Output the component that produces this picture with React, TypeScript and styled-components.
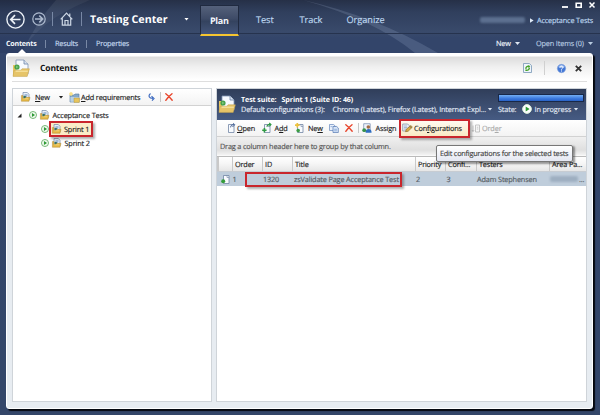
import React from "react";
import styled, { createGlobalStyle, css } from "styled-components";

const GlobalStyle = createGlobalStyle`
  *, *::before, *::after { box-sizing: border-box; }
  body { margin: 0; overflow: hidden; }
  svg { display: block; flex: none; overflow: visible; }
`;

const Window = styled.div`
  position: relative;
  width: 600px;
  height: 415px;
  display: flex;
  flex-direction: column;
  overflow: hidden;
  font: 7px/10px "Open Sans", "Noto Sans", sans-serif;
  text-rendering: geometricPrecision;
  white-space: nowrap;
  color: #1c1c1c;
  background: linear-gradient(180deg, #263047 0, #303f5d 12px, #394a6b 32px, #33456a 38px, #334669 100%);
`;

const Backdrop = styled.svg`
  position: absolute;
  inset: 0;
`;

const Header = styled.header`
  position: relative;
  display: flex;
  height: 34px;
  padding-left: 6px;
  border-bottom: 1px solid #26334e;
`;

const Brand = styled.div`
  display: flex;
  align-items: center;
  width: 194px;
  padding-top: 5px;
`;

const Bar = styled.span<{ $h?: number; $left?: number; $right?: number; $color?: string }>`
  flex: none;
  width: 1px;
  height: ${(p) => p.$h ?? 10}px;
  margin-left: ${(p) => p.$left ?? 0}px;
  margin-right: ${(p) => p.$right ?? 0}px;
  background: ${(p) => p.$color ?? "#7888a5"};
`;

const Gap = styled.span<{ $w: number }>`
  flex: none;
  width: ${(p) => p.$w}px;
`;

const Label = styled.span<{ $w?: number; $size?: number; $bold?: boolean; $color?: string; $track?: number }>`
  display: block;
  flex: none;
  padding-top: 1px;
  ${(p) => p.$w !== undefined && css`width: ${p.$w}px;`}
  font-size: ${(p) => p.$size ?? 7.3}px;
  font-weight: ${(p) => (p.$bold ? 700 : 400)};
  color: ${(p) => p.$color ?? "inherit"};
  letter-spacing: ${(p) => p.$track ?? -0.15}px;
  ${(p) => !p.$bold && css`-webkit-text-stroke: 0.15px currentColor;`}
`;

const Under = styled.span`
  text-decoration: underline;
  text-decoration-thickness: 0.7px;
  text-underline-offset: 1px;
`;

const Caret = styled.span<{ $color?: string }>`
  flex: none;
  width: 5px;
  height: 3px;
  clip-path: polygon(0 0, 100% 0, 50% 100%);
  background: ${(p) => p.$color ?? "#dfe7f3"};
`;

const ActiveTab = styled.div`
  width: 39px;
  height: 31px;
  margin-top: 5px;
  padding: 0 0 0 9px;
  display: flex;
  align-items: center;
  border: 1px solid #202a40;
  border-bottom: 2px solid #f5c530;
  border-radius: 1px 1px 0 0;
  background: linear-gradient(180deg, #55617b 0, #3e4b67 45%, #34435f 55%, #44557a 100%);
`;

const Tabs = styled.div`
  display: flex;
  align-items: center;
  padding: 6px 0 0 17px;
`;

const TopRight = styled.div`
  margin-left: auto;
  display: flex;
  flex-direction: column;
  align-items: flex-end;
`;

const WindowButtons = styled.div`
  display: flex;
  height: 9px;
  align-items: center;
  padding-right: 5px;
`;

const Crumbs = styled.div`
  display: flex;
  align-items: center;
  height: 21px;
  padding: 1px 7px 0 0;
`;

const Smudge = styled.span<{ $w: number; $color: string }>`
  flex: none;
  width: ${(p) => p.$w}px;
  height: 6px;
  border-radius: 2px;
  background: ${(p) => p.$color};
  filter: blur(1.3px);
`;

const SubNav = styled.nav`
  position: relative;
  display: flex;
  align-items: center;
  height: 19px;
  padding: 0 7px 0 6px;
`;

const Notch = styled.span`
  position: absolute;
  left: 18px;
  bottom: 0;
  width: 8px;
  height: 4px;
  clip-path: polygon(50% 0, 100% 100%, 0 100%);
  background: #fff;
`;

const Push = styled.span`
  margin-left: auto;
`;

const Sheet = styled.main`
  position: relative;
  display: flex;
  flex-direction: column;
  width: 587px;
  height: 356px;
  margin-left: 6px;
  padding: 0 5px 6px;
  border: 1px solid #fff;
  border-radius: 3px;
  background: linear-gradient(180deg, #fff 0, #fff 2px, #dcdcdc 3px, #f0f0f0 13px, #fff 26px, #fff 33px, #e7ecf1 60px);
  box-shadow: 2px 2px 1px #05080f;
`;

const SheetHeader = styled.div`
  display: flex;
  align-items: center;
  height: 28px;
  padding: 1px 5px 0 0;
  border-bottom: 1px solid #dedede;
  flex: none;
`;

const Columns = styled.div`
  display: flex;
  flex: 1;
  min-height: 0;
  gap: 4px;
  margin-top: 6px;
`;

const Pane = styled.section<{ $w: number }>`
  display: flex;
  flex: none;
  flex-direction: column;
  width: ${(p) => p.$w}px;
  border: 1px solid #cfd4d9;
  background: #fff;
`;

const Toolbar = styled.div<{ $pad: number }>`
  display: flex;
  align-items: center;
  flex: none;
  height: 17px;
  padding-left: ${(p) => p.$pad}px;
  border-bottom: 1px solid #d2d2d2;
  background: linear-gradient(180deg, #fff, #f3f3f3);
`;

const Tree = styled.div`
  padding-top: 2px;
`;

const TreeRow = styled.div<{ $indent: number }>`
  display: flex;
  align-items: center;
  height: 14px;
  padding-left: ${(p) => p.$indent}px;
`;

const marked = css`
  border: 2px solid #c9262d;
  box-shadow: 2px 2px 2px rgba(60, 60, 60, 0.4);
`;

const SelectedNode = styled.div`
  position: relative;
  display: flex;
  flex: none;
  align-items: center;
  width: 44px;
  height: 16px;
  margin-left: -1px;
  padding-left: 0.5px;
  background: #faedc8;
  ${marked}
`;

const SuiteHeader = styled.div`
  display: flex;
  flex: none;
  height: 31px;
  padding-left: 1px;
  background: linear-gradient(180deg, #303e5a, #465b83);
  color: #e2e9f4;
`;

const SuiteIconHolder = styled.div`
  width: 18px;
  margin-right: 3px;
  padding-top: 6px;
`;

const SuiteInfo = styled.div`
  display: flex;
  flex-direction: column;
  width: 259px;
  padding: 5px 0 0 2px;
`;

const Line = styled.div`
  display: flex;
  align-items: center;
  height: 10px;
`;

const SuiteState = styled.div`
  display: flex;
  flex-direction: column;
  gap: 2px;
  padding-top: 5px;
`;

const Progress = styled.div`
  width: 86px;
  height: 8px;
  border: 1px solid #182848;
  background: linear-gradient(180deg, #73aef2, #3a78dd 60%, #2962c4);
`;

const MarkedButton = styled.div`
  position: relative;
  z-index: 1;
  display: flex;
  flex: none;
  align-items: center;
  width: 71px;
  height: 19px;
  padding-left: 1px;
  background: linear-gradient(180deg, #fffaf0, #f9eac4);
  ${marked}
`;

const GroupBar = styled.div`
  position: relative;
  flex: none;
  height: 20px;
  padding: 4px 0 0 3px;
  background: linear-gradient(180deg, #f0f0f0, #dfdfdf 13px, #f3f3f3 18px, #fff);
  border-bottom: 1px solid #bbb;
  color: #555;
`;

const Tooltip = styled.div`
  position: absolute;
  z-index: 2;
  left: 219px;
  top: 8px;
  width: 137px;
  height: 17px;
  padding: 2px 0 0 3px;
  border: 1px solid #777;
  border-radius: 2px;
  background: linear-gradient(180deg, #fff, #e5e8f2);
  box-shadow: 1.5px 1.5px 2px rgba(0, 0, 0, 0.4);
  color: #444;
`;

const GridHeader = styled.div`
  display: flex;
  flex: none;
  height: 15px;
  background: linear-gradient(180deg, #fff, #f5f5f5 50%, #e6e6e6);
  border-bottom: 1px solid #c7ccd2;
`;

const HeadCell = styled.div<{ $w: number }>`
  width: ${(p) => p.$w}px;
  flex: none;
  padding: 2px 0 0 ${(p) => (p.$w > 2 ? 2 : 0)}px;
  border-left: 1px solid #c9c9c9;
`;

const GridRow = styled.div`
  position: relative;
  display: flex;
  align-items: center;
  flex: none;
  height: 14px;
  background: #bfcddb;
  color: #555b62;
`;

const RowMark = styled.span`
  position: absolute;
  left: 28px;
  top: 0;
  width: 157px;
  height: 15px;
  ${marked}
`;

const Play = ({ s = 8, solid = false }: { s?: number; solid?: boolean }) => (
  <svg width={s} height={s} viewBox="0 0 10 10">
    <circle cx="5" cy="5" r="4.4" fill={solid ? "#fff" : "#f2faf0"} stroke={solid ? "#d8ecd8" : "#58a858"} strokeWidth="1" />
    <path d="M3.7 2.5 7.6 5 3.7 7.5Z" fill="#2d9a35" />
  </svg>
);

const SuiteIcon = ({ s }: { s: number }) => (
  <svg width={s} height={s} viewBox="0 0 18 18">
    <path d="M4 1h8l4 4v10H4Z" fill="#f7faff" stroke="#8296b4" strokeWidth=".8" />
    <path d="M12 1v4h4" fill="#d7e2f1" stroke="#6f86a8" strokeWidth=".8" />
    <path d="M1 6v11h3V6Z" fill="#e7c560" />
    <path d="M2 11.2h7l1-1.4h7.4L15.2 17.4H1Z" fill="#e6c468" stroke="#c2a04c" strokeWidth=".5" />
    <path d="M3.6 12.2h12.2" stroke="#fbe9ac" strokeWidth="1" />
    <circle cx="5" cy="8" r="2.6" fill="#47a14b" />
    <path d="M4 6.5 6.6 8 4 9.5Z" fill="#7cc47c" />
  </svg>
);

const SmallSuite = () => (
  <svg width="9" height="10" viewBox="0 0 9 10">
    <path d="M2 .5h4.3L8 2.3V8H2Z" fill="#e9f0f8" stroke="#7288a8" strokeWidth=".7" />
    <path d="M3.5 3h3M3.5 4.5h2" stroke="#4d7bb8" strokeWidth=".9" />
    <path d="M.4 3.5v5.8h7.6l1-4H4.4l-.8.9H1.9V3.5Z" fill="#e3b743" stroke="#a67c26" strokeWidth=".4" />
    <path d="M2.3 6.8h5" stroke="#f9e18f" strokeWidth=".7" />
    <circle cx="3.6" cy="5" r="1.2" fill="#39745f" />
  </svg>
);

const AddRequirements = () => (
  <svg width="11" height="11" viewBox="0 0 11 11">
    <path d="M1 3h4l1-1h4v8H1Z" fill="#86a9c9" stroke="#557b9d" strokeWidth=".6" />
    <path d="M1.4 5h8.4v4.8H1.4Z" fill="#b9d1e4" />
    <path d="M5 6h5.4v4.4H5Z" fill="#e8c55c" stroke="#a98a2f" strokeWidth=".4" />
    <circle cx="2" cy="2" r="1.7" fill="#f2cf58" />
    <path d="M2 0v4M0 2h4" stroke="#fff3ba" strokeWidth=".6" />
  </svg>
);

const RedX = () => (
  <svg width="8" height="8" viewBox="0 0 8 8">
    <path d="M.8.8C3 2.5 5.4 5 7.2 7.3M7 .7C5 2.3 2.4 4.8.8 7.3" fill="none" stroke="#e8452c" strokeWidth="1.4" strokeLinecap="round" />
  </svg>
);

const Page = ({ kind }: { kind: "open" | "add" | "new" | "child" }) => (
  <svg width="10" height="10" viewBox="0 0 10 10">
    <path d="M2.5 1.5H8v8H2.5Z" fill="#f9fbfe" stroke="#7185a4" strokeWidth=".8" />
    <path d="M6 1.5v2h2" fill="none" stroke="#7185a4" strokeWidth=".6" />
    {kind === "open" && <path d="M4.6 4.4C4.6 2.4 6 1.4 8 1.7M7.2.2 8.8 1.7 7.4 3.2" fill="none" stroke="#3f5f94" strokeWidth=".9" />}
    {kind === "add" && (
      <>
        <path d="M5 3.8C5 2 6.4 1.3 8 1.5M7.2 0l1.7 1.5-1.4 1.6" fill="none" stroke="#2f9a43" strokeWidth="1.2" />
        <path d="M.2 7.2h4.4M2.4 5v4.4" stroke="#2f9a43" strokeWidth="1.6" />
      </>
    )}
    {kind === "new" && (
      <>
        <path d="M0 2.2h4.6M2.3 0v4.6" stroke="#edc23c" strokeWidth="1.7" />
        <circle cx="3.2" cy="7.6" r="1.8" fill="#3b9c43" />
      </>
    )}
    {kind === "child" && <circle cx="2.2" cy="7.3" r="2" fill="#359c3b" />}
  </svg>
);

const CopyIcon = () => (
  <svg width="10" height="9" viewBox="0 0 10 9">
    <path d="M.5.5h4l1.5 1.3V6.5H.5Z" fill="#e9f0fb" stroke="#6487bd" strokeWidth=".7" />
    <path d="M4 2.5h3.7L9.3 4v4.5H4Z" fill="#d9e6f8" stroke="#5377b1" strokeWidth=".7" />
    <path d="M5.2 5.3h2.7M5.2 6.8h2.7M1.5 2.6h2" stroke="#6790ca" strokeWidth=".6" />
  </svg>
);

const AssignIcon = () => (
  <svg width="10" height="10" viewBox="0 0 10 10">
    <path d="M1.7.7h6.5v7.5H1.7Z" fill="#edf3fb" stroke="#7188ad" strokeWidth=".7" />
    <circle cx="6.3" cy="4" r="1.8" fill="#a26c44" />
    <path d="M3.6 9.7c0-3 1.4-3.7 3-3.7s3 .7 3 3.7Z" fill="#2f6dc0" />
    <circle cx="2.2" cy="7.2" r="1.9" fill="#36924b" />
  </svg>
);

const ConfigIcon = () => (
  <svg width="11" height="10" viewBox="0 0 11 10">
    <path d="M.7 1h5l2 2-2.4 5H.7Z" fill="#e8edf3" stroke="#7f8da0" strokeWidth=".7" />
    <path d="M2 3h3M2 4.5h3M2 6h2" stroke="#7897bf" strokeWidth=".6" />
    <path d="m3.5 8.7.8-2.6L9 2.5l1.3 1.7-4.2 4.1Z" fill="#d7ad45" stroke="#85662a" strokeWidth=".6" />
    <path d="m8 3.3 1.5 1.8" stroke="#555" strokeWidth=".7" />
  </svg>
);

export default function App() {
  return (
    <>
      <GlobalStyle />
      <Window>
        <Backdrop width="600" height="415" viewBox="0 0 600 415">
          <path d="M0 0H56Q36 22 22 53H0Z" fill="#0b1530" opacity=".1" />
          <path d="M56 0H90Q36 22 22 53Q36 22 56 0Z" fill="#fff" opacity=".05" />
          <path d="M303 0Q375 16 438 53H415Q375 20 303 0Z" fill="#b9cbe6" opacity=".17" />
        </Backdrop>
        <Header>
          <Brand>
            <svg width="19" height="19" viewBox="0 0 19 19" fill="none" stroke="#edf2f8">
              <circle cx="9.5" cy="9.5" r="8.6" strokeWidth="1.4" />
              <path d="M14.5 9.5h-9M9 5.2 4.8 9.5 9 13.8" strokeWidth="1.7" />
            </svg>
            <Gap $w={7} />
            <svg width="14" height="14" viewBox="0 0 14 14" fill="none" stroke="#aebbcf">
              <circle cx="7" cy="7" r="6.2" strokeWidth="1.2" />
              <path d="M3 7h7M7.3 3.6 10.7 7l-3.4 3.4" strokeWidth="1.5" />
            </svg>
            <Bar $h={14} $left={6} $right={7} />
            <svg width="13" height="14" viewBox="0 0 13 14" fill="none" stroke="#cdd7e5" strokeWidth="1.2">
              <path d="M.7 7.4 6.5 1.2l5.8 6.2M2.3 6.2v7h8.4v-7M5 13V8.5h3V13M9.8 4V1.5" />
            </svg>
            <Bar $h={14} $left={8} $right={8} />
            <Label $w={94} $size={10.7} $bold $color="#fff" $track={0}>Testing Center</Label>
            <Caret $color="#fff" />
          </Brand>
          <ActiveTab><Label $size={9} $bold $color="#f3f6fb" $track={-0.3}>Plan</Label></ActiveTab>
          <Tabs>
            <Label $w={43.5} $size={9.2} $color="#bed7ef" $track={-0.05}>Test</Label>
            <Label $w={47} $size={9.2} $color="#bed7ef" $track={-0.05}>Track</Label>
            <Label $size={9.2} $color="#bed7ef" $track={-0.05}>Organize</Label>
          </Tabs>
          <TopRight>
            <WindowButtons>
              <svg width="34" height="8" viewBox="0 0 34 8" fill="none" stroke="#fff">
                <path d="M1 6h6" strokeWidth="1.8" />
                <path d="M15.2 2.2h5v4h-5Z" strokeWidth="1.6" />
                <path d="m28.5 1.5 5 5m0-5-5 5" strokeWidth="1.5" />
              </svg>
            </WindowButtons>
            <Crumbs>
              <Smudge $w={45} $color="#5c6f8f" />
              <Gap $w={5} />
              <svg width="4" height="5" viewBox="0 0 4 5"><path d="M0 .2 3.6 2.5 0 4.8Z" fill="#e1ebf7" /></svg>
              <Gap $w={3} />
              <Label $color="#bed7ef">Acceptance Tests</Label>
            </Crumbs>
          </TopRight>
        </Header>
        <SubNav>
          <Label $w={39} $size={7.1} $bold $color="#f4f7fb" $track={-0.2}>Contents</Label>
          <Bar $h={8} $right={9} />
          <Label $w={31} $color="#c4d9ee" $track={-0.22}>Results</Label>
          <Bar $h={8} $right={9} />
          <Label $color="#c4d9ee" $track={-0.22}>Properties</Label>
          <Push />
          <Label $w={19} $color="#eef3fa">New</Label>
          <Caret />
          <Gap $w={16} />
          <Label $w={52} $color="#b8cbe0">Open Items (0)</Label>
          <Caret $color="#b8cbe0" />
          <Notch />
        </SubNav>
        <Sheet>
          <SheetHeader>
            <SuiteIcon s={18} />
            <Gap $w={10} />
            <Label $size={8.5} $bold $color="#151515" $track={-0.15}>Contents</Label>
            <Push />
            <svg width="9" height="10" viewBox="0 0 9 10">
              <path d="M.5.5h5.8l2.2 2V9.5h-8Z" fill="#eff5fc" stroke="#7797b5" strokeWidth=".8" />
              <path d="M6.5 3.4C3.8 2.9 3 4 2.8 5.8M2.4 7c2.3.8 3.8-.1 4-2.2" fill="none" stroke="#47a328" strokeWidth="1.4" />
              <path d="m5.5 2 1.8 1.7-2 1.3Z" fill="#47a328" />
            </svg>
            <Bar $h={14} $left={12} $right={12} $color="#d0d0d0" />
            <svg width="9" height="9" viewBox="0 0 9 9">
              <circle cx="4.5" cy="4.5" r="4.2" fill="#4579d6" stroke="#8caadd" strokeWidth=".6" />
              <path d="M1.2 3A3.7 3.7 0 0 1 7.8 3Q4.5 4.7 1.2 3Z" fill="#a9c5f3" />
              <path d="M3 3.5C3.2 1.8 6 2 5.9 3.5 5.8 4.6 4.5 4.4 4.5 5.6M4.5 6.5v1" fill="none" stroke="#fff" strokeWidth="1" />
            </svg>
            <Gap $w={9} />
            <svg width="7" height="7" viewBox="0 0 7 7"><path d="m.8.8 5.4 5.4m0-5.4L.8 6.2" stroke="#333" strokeWidth="1.8" /></svg>
          </SheetHeader>
          <Columns>
            <Pane $w={200}>
              <Toolbar $pad={8}>
                <SmallSuite />
                <Gap $w={5} />
                <Label $w={23.5}><Under>N</Under>ew</Label>
                <Caret $color="#222" />
                <Gap $w={5} />
                <AddRequirements />
                <Gap $w={1.5} />
                <Label $w={67}><Under>A</Under>dd requirements</Label>
                <svg width="7" height="8" viewBox="0 0 7 8">
                  <path d="M2.5.5C-.1 2.6.7 5.5 5 5.5M3.5 3.2 6 5.5 4 7.7" fill="none" stroke="#3e6bc0" strokeWidth="1.2" />
                </svg>
                <Bar $left={5} $right={4} $color="#c6c6c6" />
                <RedX />
              </Toolbar>
              <Tree>
                <TreeRow $indent={4}>
                  <svg width="5" height="5" viewBox="0 0 5 5"><path d="M4.5.5v4h-4Z" fill="#222" /></svg>
                  <Gap $w={7} />
                  <Play />
                  <Gap $w={2.5} />
                  <SmallSuite />
                  <Gap $w={4} />
                  <Label>Acceptance Tests</Label>
                </TreeRow>
                <TreeRow $indent={28}>
                  <Play />
                  <Gap $w={1} />
                  <SelectedNode>
                    <SmallSuite />
                    <Gap $w={3.5} />
                    <Label>Sprint 1</Label>
                  </SelectedNode>
                </TreeRow>
                <TreeRow $indent={28}>
                  <Play />
                  <Gap $w={2.5} />
                  <SmallSuite />
                  <Gap $w={4} />
                  <Label>Sprint 2</Label>
                </TreeRow>
              </Tree>
            </Pane>
            <Pane $w={371}>
              <SuiteHeader>
                <SuiteIconHolder><SuiteIcon s={18} /></SuiteIconHolder>
                <SuiteInfo>
                  <Line>
                    <Label $w={40.5} $size={7.1} $bold $color="#fff" $track={-0.08}>Test suite:</Label>
                    <Label $size={7.1} $bold $color="#fff" $track={-0.08}>Sprint 1 (Suite ID: 46)</Label>
                  </Line>
                  <Line>
                    <Label $w={91.5}>Default configurations (3):</Label>
                    <Label $w={155}>Chrome (Latest), Firefox (Latest), Internet Expl...</Label>
                    <Caret />
                  </Line>
                </SuiteInfo>
                <SuiteState>
                  <Progress />
                  <Line>
                    <Label $w={24}>State:</Label>
                    <Play s={10} solid />
                    <Gap $w={2.5} />
                    <Label $w={39}>In progress</Label>
                    <Caret />
                  </Line>
                </SuiteState>
              </SuiteHeader>
              <Toolbar $pad={9}>
                <Page kind="open" />
                <Gap $w={1} />
                <Label $w={25}><Under>O</Under>pen</Label>
                <Page kind="add" />
                <Gap $w={2.5} />
                <Label $w={20.5}>A<Under>d</Under>d</Label>
                <Page kind="new" />
                <Gap $w={3} />
                <Label $w={21}>Ne<Under>w</Under></Label>
                <CopyIcon />
                <Gap $w={5.5} />
                <RedX />
                <Bar $left={5.5} $right={3} $color="#c6c6c6" />
                <AssignIcon />
                <Gap $w={3.5} />
                <Label $w={23.5}>Assign</Label>
                <MarkedButton>
                  <ConfigIcon />
                  <Gap $w={1} />
                  <Label>Con<Under>f</Under>igurations</Label>
                </MarkedButton>
                <Gap $w={2} />
                <svg width="8" height="9" viewBox="0 0 8 9" fill="none" stroke="#b8b8b8" strokeWidth=".8">
                  <path d="M1 1.5v6M3.5 1h4v7h-4ZM4.8 3.2h1.5M4.8 5h1.5M0 6l1 1.5L2.2 6" />
                </svg>
                <Gap $w={2} />
                <Label $color="#aaa">Ord<Under>e</Under>r</Label>
              </Toolbar>
              <GroupBar>
                <Label $track={-0.17}>Drag a column header here to group by that column.</Label>
                <Tooltip><Label $track={-0.2}>Edit configurations for the selected tests</Label></Tooltip>
              </GroupBar>
              <GridHeader>
                <HeadCell $w={1} />
                <HeadCell $w={14} />
                <HeadCell $w={30}><Label>Order</Label></HeadCell>
                <HeadCell $w={30}><Label>ID</Label></HeadCell>
                <HeadCell $w={123}><Label>Title</Label></HeadCell>
                <HeadCell $w={30}><Label $track={-0.2}>Priority</Label></HeadCell>
                <HeadCell $w={31}><Label>Confi...</Label></HeadCell>
                <HeadCell $w={73}><Label>Testers</Label></HeadCell>
                <HeadCell $w={37}><Label>Area Pa...</Label></HeadCell>
              </GridHeader>
              <GridRow>
                <Gap $w={4} />
                <Page kind="child" />
                <Gap $w={1.5} />
                <Label $w={30.5}>1</Label>
                <Label $w={31}>1320</Label>
                <Label $w={122}>zsValidate Page Acceptance Test</Label>
                <Label $w={30.5}>2</Label>
                <Label $w={30.5}>3</Label>
                <Label $w={73}>Adam Stephensen</Label>
                <Smudge $w={28} $color="#9eafc1" />
                <Gap $w={1} />
                <Label>...</Label>
                <RowMark />
              </GridRow>
            </Pane>
          </Columns>
        </Sheet>
      </Window>
    </>
  );
}
